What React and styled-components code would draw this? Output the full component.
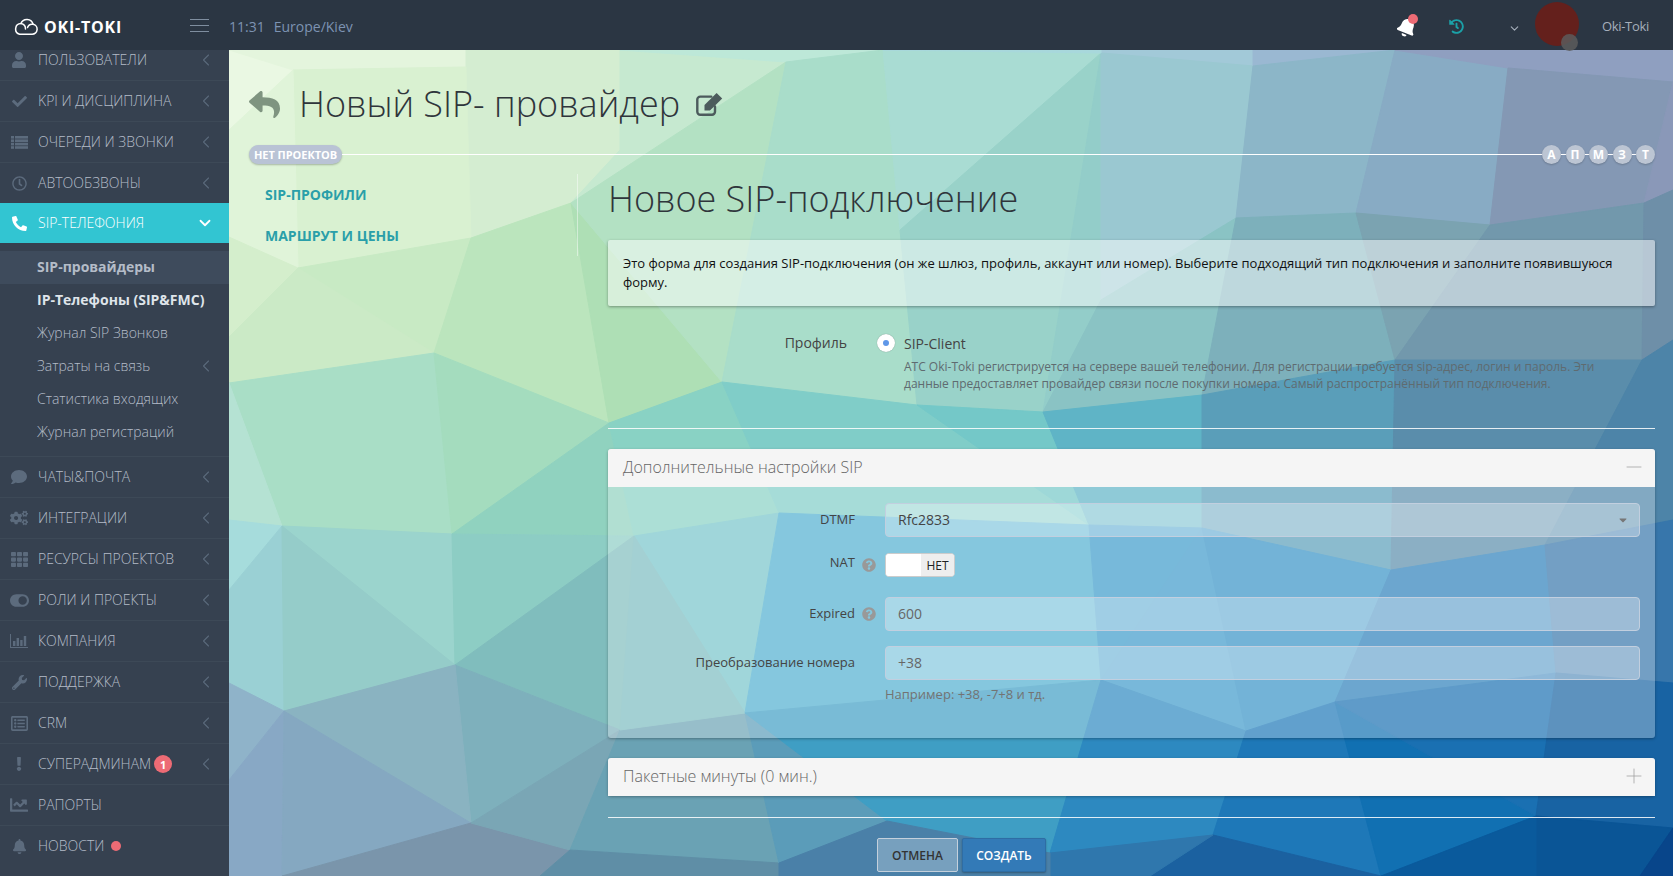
import React from 'react';
import styled, { createGlobalStyle } from 'styled-components';
import { ChevronLeft, ChevronDown, Minus, Plus } from 'lucide-react';
import {
  FaUser, FaCheck, FaRegClock, FaPhone, FaComment, FaCogs, FaTh, FaToggleOn,
  FaWrench, FaRegListAlt, FaExclamation, FaChartLine, FaBell, FaHistory,
  FaReply, FaQuestionCircle, FaCaretDown,
} from 'react-icons/fa';

const MESH = [
  ['229,50 293,70 229,130', '#eaf8e3'],
  ['229,50 466,50 466,67 293,70', '#e4f5dd'],
  ['466,50 620,50 620,150 571,203 471,238 466,67', '#d4edd1'],
  ['620,50 786,62 571,203 620,150', '#c6e9d0'],
  ['620,50 883,50 786,62', '#bde8d8'],
  ['293,70 466,67 471,238 298,268', '#d9f1d1'],
  ['229,130 293,70 298,268 229,237', '#e0f4d9'],
  ['229,237 298,268 229,337', '#d4eecc'],
  ['298,268 471,238 434,353', '#c8eac4'],
  ['229,337 298,268 434,353 229,383', '#cbeac6'],
  ['471,238 571,203 609,423 434,353', '#bbe5bd'],
  ['571,203 722,382 609,423', '#aedfb5'],
  ['571,203 786,62 722,382', '#b3e1c3'],
  ['786,62 883,50 917,405 722,382', '#a9ddca'],
  ['883,50 1101,53 900,230', '#a9dcd3'],
  ['900,230 1101,53 1043,412 917,405', '#99d2c9'],
  ['1101,53 1101,300 1043,412', '#93cdc9'],
  ['1101,50 1253,50 1253,66 1101,53', '#a2c9d8'],
  ['1101,53 1253,66 1236,218 1101,300', '#9ac8d1'],
  ['1101,300 1236,218 1202,395 1043,412', '#8ac3c4'],
  ['883,50 1101,50 1101,53', '#a8d8dc'],
  ['1253,50 1395,50 1253,66', '#9ab8d2'],
  ['1253,66 1395,50 1356,213 1236,218', '#8cb6c8'],
  ['1395,50 1508,68 1490,225 1356,213', '#88abc4'],
  ['1395,50 1673,50 1673,82 1508,68', '#8f9fc0'],
  ['1508,68 1673,82 1644,203 1490,225', '#8498b4'],
  ['1673,82 1673,190 1644,203', '#8a98b8'],
  ['1236,218 1356,213 1395,360 1202,395', '#7db0bb'],
  ['1356,213 1490,225 1395,360', '#7ba3b1'],
  ['1490,225 1644,203 1642,360 1395,360', '#7298ac'],
  ['1644,203 1673,190 1673,340 1642,360', '#6e8fa8'],
  ['229,383 434,353 452,534 282,526', '#a9dec6'],
  ['434,353 609,423 452,534', '#a4dcbe'],
  ['609,423 634,536 452,534', '#90d2bf'],
  ['609,423 722,382 779,513 634,536', '#89d2c4'],
  ['722,382 917,405 1089,525 779,513', '#80cdc8'],
  ['917,405 1043,412 1089,525', '#74c8c8'],
  ['1043,412 1202,395 1202,528 1089,525', '#5fb4c6'],
  ['1202,395 1395,360 1391,570 1202,528', '#5a9eb9'],
  ['1395,360 1642,360 1545,545 1391,570', '#5a8dab'],
  ['1642,360 1673,340 1673,520 1545,545', '#4d84a8'],
  ['229,383 282,526 229,520', '#b5e2d3'],
  ['229,520 282,526 229,590', '#a6dcdc'],
  ['229,590 282,526 284,711 229,683', '#9ad0d4'],
  ['282,526 452,534 455,665', '#9bd4cd'],
  ['282,526 455,665 284,711', '#95ccc9'],
  ['452,534 634,536 455,665', '#8dcdc4'],
  ['455,665 634,536 620,730', '#80bdbd'],
  ['455,665 620,730 471,823', '#7eb0bc'],
  ['284,711 455,665 471,823', '#8ab3c1'],
  ['229,683 284,711 229,780', '#8fb3c9'],
  ['229,780 284,711 282,876 229,876', '#88a8c5'],
  ['284,711 471,823 282,876', '#85a8c1'],
  ['282,876 471,823 570,850 540,876', '#7a95ab'],
  ['471,823 620,730 570,850', '#7aa6b5'],
  ['620,730 745,713 779,863 570,850', '#6aa2b4'],
  ['570,850 779,863 779,876 540,876', '#5f8ea6'],
  ['745,713 887,821 779,863', '#5b9cb9'],
  ['634,536 779,513 745,713', '#77c5ca'],
  ['620,730 634,536 745,713', '#7cbcc0'],
  ['779,513 1089,525 1101,680 745,713', '#51afd0'],
  ['1089,525 1202,528 1101,680', '#3d9bca'],
  ['1202,528 1246,731 1101,680', '#3e9aca'],
  ['1202,528 1391,570 1335,702 1246,731', '#3792c6'],
  ['1391,570 1545,545 1556,673 1335,702', '#2d80ba'],
  ['1545,545 1673,520 1673,683 1556,673', '#3776ab'],
  ['745,713 1101,680 1050,853 887,821', '#3f9ec4'],
  ['1101,680 1246,731 1213,835 1050,853', '#2d89c0'],
  ['1246,731 1335,702 1381,876 1213,835', '#1e78b8'],
  ['1335,702 1536,816 1381,876', '#1170b2'],
  ['1335,702 1556,673 1536,816', '#1a70b2'],
  ['1556,673 1673,683 1673,828 1536,816', '#1863a3'],
  ['1536,816 1673,828 1640,876 1536,876', '#0a5596'],
  ['1640,876 1673,828 1673,876', '#08458a'],
  ['1381,876 1536,816 1536,876', '#0a5a9c'],
  ['1213,835 1381,876 1150,876', '#1b61a0'],
  ['1050,853 1213,835 1150,876 1050,876', '#2f77ad'],
  ['779,863 887,821 1050,853 1050,876 779,876', '#4a80a8'],
];

const Global = createGlobalStyle`
  html, body { margin: 0; padding: 0; height: 100%; overflow: hidden; }
  body { font-family: "Open Sans", "Liberation Sans", sans-serif; font-size: 14px; color: #333; }
  * { box-sizing: border-box; }
`;

const Page = styled.div`display: flex; flex-direction: column; height: 876px; width: 1673px; overflow: hidden;`;
const Header = styled.header`display: flex; align-items: center; height: 50px; flex: none; background: #2b3643; position: relative; z-index: 2;`;
const HeaderLeft = styled.div`display: flex; align-items: center; justify-content: space-between; width: 229px; padding: 3px 20px 0 14px;`;
const Brand = styled.div`display: flex; align-items: center; gap: 6px;`;
const BrandName = styled.span`font-size: 16px; font-weight: 700; letter-spacing: .8px; color: #fff; line-height: 20px;`;
const Burger = styled.div`display: flex; flex-direction: column; gap: 5px; width: 19px; margin-top: -3px;`;
const BurgerLine = styled.span`display: block; height: 1px; background: #7f8e9f;`;
const Clock = styled.div`display: flex; gap: 9px; color: #7d93b2; font-size: 14px; line-height: 20px; font-weight: 400; padding-top: 3px;`;
const HeaderRight = styled.div`display: flex; align-items: center; margin-left: auto; padding-right: 24px; height: 50px;`;
const BellWrap = styled.div`position: relative; display: flex; width: 20px; color: #fff; font-size: 20px; margin-right: 32px; transform: translateY(2px);
  svg { transform: rotate(22deg); }`;
const BellDot = styled.span`position: absolute; width: 10px; height: 10px; border-radius: 50%; background: #ed6b75; top: -3px; right: -1px;`;
const HistoryIcon = styled.div`display: flex; color: #1ba1a8; font-size: 15px; margin: 3px 44px 0 0;`;
const CaretIcon = styled.div`display: flex; color: #a6afbb; margin-right: 14px; margin-top: 7px;`;
const Avatar = styled.div`position: relative; width: 44px; height: 44px; border-radius: 50%; background: #64201c; margin: 0 23px 2px 0;`;
const AvatarBadge = styled.span`position: absolute; width: 17px; height: 17px; border-radius: 50%; background: rgba(92,92,92,.85); right: 1px; bottom: -5px;`;
const UserName = styled.span`color: #a6afbb; font-size: 13px; font-weight: 400; padding-top: 1px; letter-spacing: -.3px;`;

const Body = styled.div`display: flex; flex: 1; min-height: 0;`;
const Sidebar = styled.nav`width: 229px; flex: none; background: #364150; overflow: hidden; display: flex; flex-direction: column;`;
const NavRow = styled.div`display: flex; align-items: center; flex: none; height: ${p => (p.$active ? 40 : 41)}px; position: relative;
  margin-top: ${p => (p.$first ? '-11px' : '0')};
  border-top: ${p => (p.$active ? 'none' : `1px solid ${p.$first ? 'transparent' : '#3d4957'}`)};
  background: ${p => (p.$active ? '#32c5d2' : 'transparent')};
  color: ${p => (p.$active ? '#fff' : '#b4bcc8')};`;
const NavIcon = styled.span`display: flex; justify-content: center; width: 38px; flex: none; font-size: ${p => p.$size || 16}px; color: ${p => (p.$active ? '#fff' : '#5c6b7d')};`;
const NavText = styled.span`font-size: 14px; font-weight: 300; text-transform: uppercase; line-height: 20px; white-space: nowrap;`;
const NavBadge = styled.span`display: flex; align-items: center; justify-content: center; width: 18px; height: 18px; margin-left: 3px; border-radius: 50%; background: #ed6b75; color: #fff; font-size: 11px; font-weight: 700;`;
const NavDot = styled.span`width: 10px; height: 10px; margin-left: 7px; border-radius: 50%; background: #ed6b75;`;
const NavArrow = styled.span`display: flex; margin-left: auto; margin-right: ${p => (p.$active ? 15 : 13)}px; color: ${p => (p.$active ? '#fff' : '#5a697b')};`;
const SubList = styled.div`flex: none; padding: 8px 0 7px;`;
const SubRow = styled.div`display: flex; align-items: center; height: 33px; padding: 0 0 1px 37px;
  font-size: 14px; line-height: 20px;
  font-weight: ${p => (p.$bold ? 700 : 300)};
  color: ${p => (p.$bright ? '#dfe4ea' : '#b4bcc8')};
  background: ${p => (p.$current ? '#3e4b5c' : 'transparent')};`;

const Main = styled.main`flex: 1; position: relative; overflow: hidden; padding: 0 18px 0 20px; background: linear-gradient(135deg, #e8f7e2, #9fd4d0 50%, #0c4f8f);`;
const MeshArt = styled.svg`position: absolute; inset: 0; width: 100%; height: 100%; display: block;`;
const Content = styled.div`position: relative;`;
const TitleRow = styled.div`display: flex; align-items: center; height: 42px; margin-top: 33px;`;
const BackIcon = styled.span`display: flex; font-size: 31px; color: #7f9480; width: 50px;`;
const PageTitle = styled.h1`margin: 0; font-size: 36px; line-height: 42px; font-weight: 300; color: #2f353b; white-space: nowrap;`;
const EditIcon = styled.span`display: flex; margin-left: 15px; color: #4c5b5c;`;
const Timeline = styled.div`display: flex; align-items: center; height: 19px; margin-top: 20px;`;
const ProjectPill = styled.span`display: inline-flex; align-items: center; height: 19px; padding: 0 5px 1px; border-radius: 10px; background: #b9c3d5; color: #fff; font-size: 11px; font-weight: 700; letter-spacing: -.05px; white-space: nowrap; box-shadow: 0 1px 2px rgba(0,0,0,.25);`;
const TimelineLine = styled.span`flex: ${p => (p.$grow ? 1 : 'none')}; width: ${p => (p.$grow ? 'auto' : '4.5px')}; height: 1.5px; background: #fff;`;
const Stage = styled.span`display: flex; align-items: center; justify-content: center; flex: none; width: 19px; height: 19px; border-radius: 50%; background: #bcc5d3; color: #fff; font-size: 12px; font-weight: 700; box-shadow: 0 1px 2px rgba(0,0,0,.2);`;

const Columns = styled.div`display: flex; margin-top: 10px;`;
const SideTabs = styled.div`width: 329px; height: 82px; flex: none; padding-left: 16px; border-right: 1px solid rgba(255,255,255,.45); margin-right: 30px;`;
const SideTab = styled.div`display: flex; align-items: center; height: 41px; color: #2a9fa9; font-size: 14px; font-weight: 700; text-transform: uppercase;`;
const FormCol = styled.div`width: 1047px; flex: none;`;
const FormTitle = styled.h2`margin: 4px 0 0; font-size: 36px; line-height: 42px; font-weight: 300; color: #2f353b; white-space: nowrap;`;
const InfoBox = styled.div`margin-top: 20px; padding: 14px 15px; background: rgba(255,255,255,.5); border-radius: 2px; font-size: 13px; line-height: 19px; color: #111; box-shadow: 0 1px 3px rgba(0,0,0,.35);`;
const ProfileRow = styled.div`display: flex; margin-top: 27px;`;
const ProfileLabel = styled.div`width: 239px; text-align: right; font-size: 14px; line-height: 20px; color: #444; flex: none;`;
const Radio = styled.span`display: flex; align-items: center; justify-content: center; width: 18px; height: 18px; margin: 1px 9px 0 30px; border-radius: 50%; background: #fff; flex: none; box-shadow: 0 0 1px rgba(0,0,0,.4);`;
const RadioDot = styled.span`width: 6px; height: 6px; border-radius: 50%; background: #5f97e8;`;
const ProfileText = styled.div`flex: 1; padding-top: 1px;`;
const ProfileName = styled.div`font-size: 14px; line-height: 20px; color: #444;`;
const ProfileDesc = styled.div`margin-top: 4px; font-size: 12px; line-height: 17px; color: #5f6b70; width: 700px;`;
const Divider = styled.div`height: 1px; background: rgba(255,255,255,.85); margin-top: ${p => p.$top}px;`;
const Panel = styled.section`margin-top: 20px; border-radius: 3px; box-shadow: 0 1px 3px rgba(0,0,0,.3); background: rgba(255,255,255,.3);`;
const PanelHead = styled.div`display: flex; align-items: center; justify-content: space-between; height: 38px; padding: 0 14px 2px 15px; background: #f5f5f5; color: #666; font-size: 16px; font-weight: 300; border-radius: 3px 3px 0 0;`;
const PanelToggle = styled.span`display: flex; color: #999; margin: -5px;`;
const PanelBody = styled.div`padding: 16px 15px 26px 0; height: 251px;`;
const FormRow = styled.div`display: flex; align-items: center; margin-top: ${p => p.$top || 0}px;`;
const FieldLabel = styled.label`width: 247px; flex: none; text-align: right; font-size: 13px; line-height: 18px; color: #444; padding-bottom: ${p => p.$lift || 2}px;`;
const HelpSlot = styled.span`display: flex; width: 30px; flex: none; padding-left: 7px; font-size: 14px; color: #999;`;
const inputStyle = `flex: 1; height: 34px; padding: 0 12px 1px; display: flex; align-items: center; justify-content: space-between;
  background: rgba(255,255,255,.3); border: 1px solid #c2cfdf; border-radius: 4px; font-size: 14px;`;
const SelectBox = styled.div`${inputStyle} color: #444;`;
const InputBox = styled.div`${inputStyle} color: #666;`;
const CaretMark = styled.span`display: flex; color: #777; font-size: 12px; margin-right: -2px;`;
const Toggle = styled.div`display: flex; width: 70px; height: 24px; border: 1px solid #ccc; border-radius: 4px; overflow: hidden; background: #fff;`;
const ToggleKnob = styled.span`width: 35px; background: #fff;`;
const ToggleLabel = styled.span`flex: 1; display: flex; align-items: center; justify-content: center; background: #eee; color: #222; font-size: 12px; font-weight: 400;`;
const HelpText = styled.div`margin: 5px 0 0 277px; font-size: 13px; line-height: 18px; color: #737373;`;
const Actions = styled.div`display: flex; gap: 4px; margin: 20px 0 0 269px;`;
const Button = styled.button`height: 34px; padding: 0; width: ${p => p.$w}px; font-family: inherit; font-size: 12px; font-weight: 600; border-radius: 2px;
  color: ${p => (p.$primary ? '#fff' : '#333')};
  background: ${p => (p.$primary ? '#337ab7' : 'rgba(255,255,255,.25)')};
  border: 1px solid ${p => (p.$primary ? '#2e6da4' : '#c4d0dc')};
  box-shadow: ${p => (p.$primary ? '0 1px 2px rgba(0,0,0,.3)' : 'none')};`;

const CloudLogo = () => (
  <svg width="24" height="17" viewBox="0 0 24 17" fill="none" stroke="#fff" strokeWidth="1.5" strokeLinecap="round" strokeLinejoin="round">
    <path d="M5.6 16.2h12.6a5 5 0 0 0 .9-9.9A6.4 6.4 0 0 0 6.9 5.6a5.4 5.4 0 0 0-1.3 10.6Z" />
    <path d="M6.9 5.6a5.4 5.4 0 0 1 4.6 5.4" />
    <path d="M19.1 6.3a5 5 0 0 0-5.6 3.3" />
  </svg>
);
const QueueIcon = () => (
  <svg width="17" height="13" viewBox="0 0 17 13" fill="currentColor">
    {[0, 3.4, 6.8, 10.2].map(y => (
      <React.Fragment key={y}>
        <rect x="0" y={y} width="3" height="2.6" />
        <rect x="4" y={y} width="13" height="2.6" />
      </React.Fragment>
    ))}
  </svg>
);
const BarsIcon = () => (
  <svg width="18" height="14" viewBox="0 0 18 14" fill="currentColor">
    <path d="M0 0h1v13h17v1H0z" />
    <rect x="3" y="7" width="2.4" height="5" />
    <rect x="6.6" y="4" width="2.4" height="8" />
    <rect x="10.2" y="6" width="2.4" height="6" />
    <rect x="13.8" y="2" width="2.4" height="10" />
  </svg>
);
const PencilSquare = () => (
  <svg width="29" height="25" viewBox="0 0 29 25" fill="none">
    <path d="M20 14.5v5.2a3 3 0 0 1-3 3H5.3a3 3 0 0 1-3-3V7.6a3 3 0 0 1 3-3h11" stroke="currentColor" strokeWidth="2.4" strokeLinecap="round" />
    <path d="M9.5 13 21.6 1l5.6 5.5-12.2 12H9.5z" fill="currentColor" />
  </svg>
);

const menuBefore = [
  ['Пользователи', FaUser, 16],
  ['KPI и дисциплина', FaCheck, 15],
  ['Очереди и звонки', QueueIcon, 16],
  ['Автообзвоны', FaRegClock, 15],
];
const subItems = [
  ['SIP-провайдеры', { $bold: true, $current: true }],
  ['IP-Телефоны (SIP&FMC)', { $bold: true, $bright: true }],
  ['Журнал SIP Звонков', {}],
  ['Затраты на связь', { arrow: true }],
  ['Статистика входящих', {}],
  ['Журнал регистраций', {}],
];
const menuAfter = [
  ['Чаты&почта', FaComment, 16, true],
  ['Интеграции', FaCogs, 18, true],
  ['Ресурсы проектов', FaTh, 17, true],
  ['Роли и проекты', FaToggleOn, 19, true],
  ['Компания', BarsIcon, 18, true],
  ['Поддержка', FaWrench, 15, true],
  ['CRM', FaRegListAlt, 17, true],
  ['Суперадминам', FaExclamation, 14, true, 'badge'],
  ['Рапорты', FaChartLine, 18, false],
  ['Новости', FaBell, 15, false, 'dot'],
];

const Arrow = () => <NavArrow><ChevronLeft size={20} strokeWidth={1.3} /></NavArrow>;

export default function App() {
  return (
    <Page>
      <Global />
      <Header>
        <HeaderLeft>
          <Brand><CloudLogo /><BrandName>OKI-TOKI</BrandName></Brand>
          <Burger><BurgerLine /><BurgerLine /><BurgerLine /></Burger>
        </HeaderLeft>
        <Clock><span>11:31</span><span>Europe/Kiev</span></Clock>
        <HeaderRight>
          <BellWrap><FaBell /><BellDot /></BellWrap>
          <HistoryIcon><FaHistory /></HistoryIcon>
          <CaretIcon><ChevronDown size={13} strokeWidth={2} /></CaretIcon>
          <Avatar><AvatarBadge /></Avatar>
          <UserName>Oki-Toki</UserName>
        </HeaderRight>
      </Header>
      <Body>
        <Sidebar>
          {menuBefore.map(([t, Icon, s], i) => (
            <NavRow key={t} $first={i === 0}>
              <NavIcon $size={s}><Icon /></NavIcon><NavText>{t}</NavText><Arrow />
            </NavRow>
          ))}
          <NavRow $active>
            <NavIcon $active $size={15}><FaPhone style={{ transform: 'scaleX(-1)' }} /></NavIcon>
            <NavText>SIP-телефония</NavText>
            <NavArrow $active><ChevronDown size={18} strokeWidth={2.4} /></NavArrow>
          </NavRow>
          <SubList>
            {subItems.map(([t, { arrow, ...p }]) => (
              <SubRow key={t} {...p}>{t}{arrow && <Arrow />}</SubRow>
            ))}
          </SubList>
          {menuAfter.map(([t, Icon, s, arrow, extra]) => (
            <NavRow key={t}>
              <NavIcon $size={s}><Icon /></NavIcon><NavText>{t}</NavText>
              {extra === 'badge' && <NavBadge>1</NavBadge>}
              {extra === 'dot' && <NavDot />}
              {arrow && <Arrow />}
            </NavRow>
          ))}
        </Sidebar>
        <Main>
          <MeshArt viewBox="229 50 1444 826" preserveAspectRatio="none" aria-hidden="true">
            {MESH.map(([pts, c]) => <polygon key={pts} points={pts} fill={c} stroke={c} strokeWidth="1" />)}
          </MeshArt>
          <Content>
            <TitleRow>
              <BackIcon><FaReply /></BackIcon>
              <PageTitle>Новый SIP- провайдер</PageTitle>
              <EditIcon><PencilSquare /></EditIcon>
            </TitleRow>
            <Timeline>
              <ProjectPill>НЕТ ПРОЕКТОВ</ProjectPill>
              <TimelineLine $grow />
              {['А', 'П', 'М', 'З', 'Т'].map((l, i) => (
                <React.Fragment key={l}>
                  {i > 0 && <TimelineLine />}
                  <Stage>{l}</Stage>
                </React.Fragment>
              ))}
            </Timeline>
            <Columns>
              <SideTabs>
                <SideTab>SIP-профили</SideTab>
                <SideTab>Маршрут и цены</SideTab>
              </SideTabs>
              <FormCol>
                <FormTitle>Новое SIP-подключение</FormTitle>
                <InfoBox>Это форма для создания SIP-подключения (он же шлюз, профиль, аккаунт или номер). Выберите подходящий тип подключения и заполните появившуюся форму.</InfoBox>
                <ProfileRow>
                  <ProfileLabel>Профиль</ProfileLabel>
                  <Radio><RadioDot /></Radio>
                  <ProfileText>
                    <ProfileName>SIP-Client</ProfileName>
                    <ProfileDesc>АТС Oki-Toki регистрируется на сервере вашей телефонии. Для регистрации требуется sip-адрес, логин и пароль. Эти данные предоставляет провайдер связи после покупки номера. Самый распространённый тип подключения.</ProfileDesc>
                  </ProfileText>
                </ProfileRow>
                <Divider $top={36} />
                <Panel>
                  <PanelHead>Дополнительные настройки SIP<PanelToggle><Minus size={24} strokeWidth={.7} /></PanelToggle></PanelHead>
                  <PanelBody>
                    <FormRow>
                      <FieldLabel>DTMF</FieldLabel><HelpSlot />
                      <SelectBox>Rfc2833<CaretMark><FaCaretDown /></CaretMark></SelectBox>
                    </FormRow>
                    <FormRow $top={16}>
                      <FieldLabel $lift={6}>NAT</FieldLabel><HelpSlot><FaQuestionCircle /></HelpSlot>
                      <Toggle><ToggleKnob /><ToggleLabel>НЕТ</ToggleLabel></Toggle>
                    </FormRow>
                    <FormRow $top={20}>
                      <FieldLabel>Expired</FieldLabel><HelpSlot><FaQuestionCircle /></HelpSlot>
                      <InputBox>600</InputBox>
                    </FormRow>
                    <FormRow $top={15}>
                      <FieldLabel>Преобразование номера</FieldLabel><HelpSlot />
                      <InputBox>+38</InputBox>
                    </FormRow>
                    <HelpText>Например: +38, -7+8 и тд.</HelpText>
                  </PanelBody>
                </Panel>
                <Panel>
                  <PanelHead>Пакетные минуты (0 мин.)<PanelToggle><Plus size={24} strokeWidth={.7} /></PanelToggle></PanelHead>
                </Panel>
                <Divider $top={21} />
                <Actions>
                  <Button $w={81}>ОТМЕНА</Button>
                  <Button $w={84} $primary>СОЗДАТЬ</Button>
                </Actions>
              </FormCol>
            </Columns>
          </Content>
        </Main>
      </Body>
    </Page>
  );
}
